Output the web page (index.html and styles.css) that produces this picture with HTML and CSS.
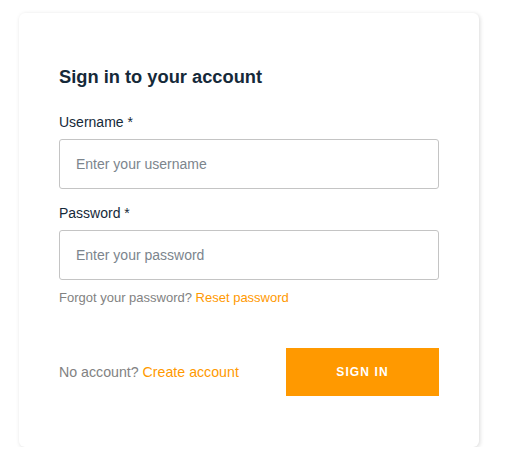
FILE: index.html
```html
<!DOCTYPE html>
<html>
<head>
<meta charset="utf-8">
<link rel="stylesheet" href="styles.css">
</head>
<body>
<div class="page">
  <form class="card">
    <h1 class="title">Sign in to your account</h1>
    <div class="field">
      <label class="label">Username *</label>
      <input class="input" type="text" placeholder="Enter your username">
    </div>
    <div class="field">
      <label class="label">Password *</label>
      <input class="input" type="password" placeholder="Enter your password">
      <div class="hint">Forgot your password? <a class="link">Reset password</a></div>
    </div>
    <div class="footer">
      <span class="footer-text">No account? <a class="link">Create account</a></span>
      <button class="button" type="button">Sign In</button>
    </div>
  </form>
</div>
</body>
</html>
```

FILE: styles.css
```css
html, body {
  margin: 0;
  padding: 0;
  background: #ffffff;
}
body {
  font-family: "Liberation Sans", Arial, sans-serif;
}
.page {
  padding: 13px 0 0 19px;
}
.card {
  box-sizing: border-box;
  width: 460px;
  padding: 52px 40px 51px 40px;
  background: #fff;
  border-radius: 6px;
  box-shadow: 1px 1px 4px 0 rgba(0, 0, 0, 0.15);
  display: flex;
  flex-direction: column;
}
.title {
  margin: 0 0 25px 0;
  font-size: 18.3px;
  line-height: 24px;
  font-weight: 700;
  color: #152939;
}
.field {
  display: flex;
  flex-direction: column;
}
.field + .field {
  margin-top: 16px;
}
.label {
  font-size: 14px;
  line-height: 16px;
  color: #152939;
  margin-bottom: 9px;
}
.input {
  box-sizing: border-box;
  height: 50px;
  width: 100%;
  padding: 0 16px;
  font-family: "Liberation Sans", Arial, sans-serif;
  font-size: 14px;
  color: #152939;
  border: 1px solid #c4c4c4;
  border-radius: 3px;
  outline: none;
  background: #fff;
}
.input::placeholder {
  color: #7c858d;
}
.hint {
  margin-top: 10px;
  font-size: 13px;
  line-height: 15px;
  color: #828282;
}
.link {
  color: #ff9900;
  cursor: pointer;
}
.footer {
  margin-top: 43px;
  display: flex;
  align-items: center;
  justify-content: space-between;
}
.footer-text {
  font-size: 14.2px;
  line-height: 16px;
  color: #828282;
}
.button {
  width: 153px;
  height: 48px;
  border: none;
  background: #ff9900;
  color: #fff;
  font-family: "Liberation Sans", Arial, sans-serif;
  font-size: 12px;
  font-weight: 700;
  letter-spacing: 1.1px;
  text-transform: uppercase;
  cursor: pointer;
}
```
